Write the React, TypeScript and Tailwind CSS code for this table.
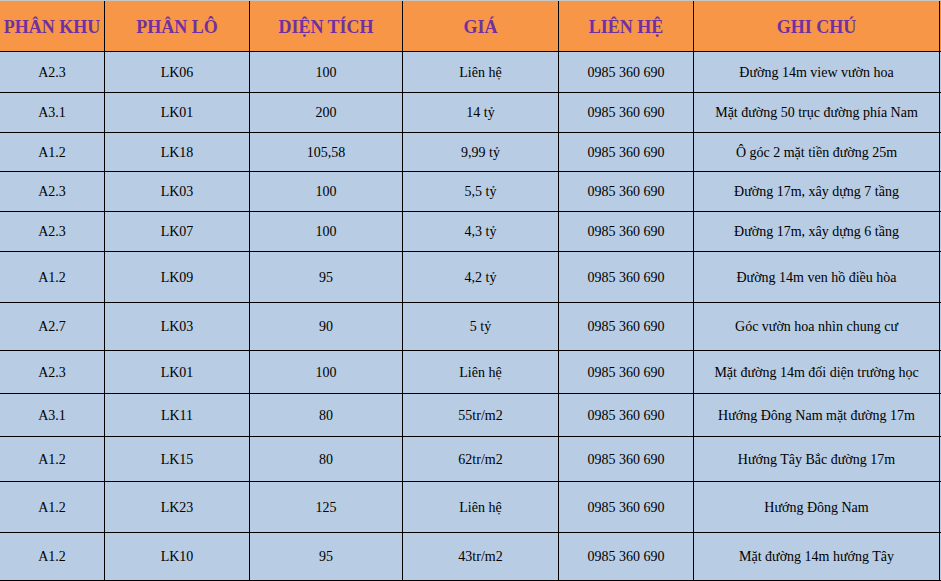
const cols = ['w-[105px]', 'w-[145px]', 'w-[153px]', 'w-[156px]', 'w-[135px]', 'w-[246px]'];

const headers = ['PHÂN KHU', 'PHÂN LÔ', 'DIỆN TÍCH', 'GIÁ', 'LIÊN HỆ', 'GHI CHÚ'];

const rows: { h: string; cells: string[] }[] = [
  { h: 'h-[41px]', cells: ['A2.3', 'LK06', '100', 'Liên hệ', '0985 360 690', 'Đường 14m view vườn hoa'] },
  { h: 'h-[40px]', cells: ['A3.1', 'LK01', '200', '14 tỷ', '0985 360 690', 'Mặt đường 50 trục đường phía Nam'] },
  { h: 'h-[39px]', cells: ['A1.2', 'LK18', '105,58', '9,99 tỷ', '0985 360 690', 'Ô góc 2 mặt tiền đường 25m'] },
  { h: 'h-[40px]', cells: ['A2.3', 'LK03', '100', '5,5 tỷ', '0985 360 690', 'Đường 17m, xây dựng 7 tầng'] },
  { h: 'h-[40px]', cells: ['A2.3', 'LK07', '100', '4,3 tỷ', '0985 360 690', 'Đường 17m, xây dựng 6 tầng'] },
  { h: 'h-[51px]', cells: ['A1.2', 'LK09', '95', '4,2 tỷ', '0985 360 690', 'Đường 14m ven hồ điều hòa'] },
  { h: 'h-[48px]', cells: ['A2.7', 'LK03', '90', '5 tỷ', '0985 360 690', 'Góc vườn hoa nhìn chung cư'] },
  { h: 'h-[43px]', cells: ['A2.3', 'LK01', '100', 'Liên hệ', '0985 360 690', 'Mặt đường 14m đối diện trường học'] },
  { h: 'h-[43px]', cells: ['A3.1', 'LK11', '80', '55tr/m2', '0985 360 690', 'Hướng Đông Nam mặt đường 17m'] },
  { h: 'h-[45px]', cells: ['A1.2', 'LK15', '80', '62tr/m2', '0985 360 690', 'Hướng Tây Bắc đường 17m'] },
  { h: 'h-[51px]', cells: ['A1.2', 'LK23', '125', 'Liên hệ', '0985 360 690', 'Hướng Đông Nam'] },
  { h: 'h-[48px]', cells: ['A1.2', 'LK10', '95', '43tr/m2', '0985 360 690', 'Mặt đường 14m hướng Tây'] },
];

export default function App() {
  return (
    <div className="w-[941px] h-[581px] overflow-hidden bg-[#b8cce4] font-['Liberation_Serif',serif]">
      <div className="h-px bg-[#c8c8c8]" />
      <div className="flex h-[51px] bg-[#f79646] border-b border-black">
        {headers.map((t, i) => (
          <div
            key={t}
            className={`${cols[i]} shrink-0 flex items-center justify-center pt-[3px] border-r border-black text-[18px] font-bold text-[#7030a0] whitespace-nowrap`}
          >
            {t}
          </div>
        ))}
      </div>
      {rows.map((r, ri) => (
        <div key={ri} className={`flex ${r.h} border-b border-black`}>
          {r.cells.map((c, i) => (
            <div
              key={i}
              className={`${cols[i]} shrink-0 flex items-center justify-center border-r border-black text-[14px] text-black whitespace-nowrap`}
            >
              {c}
            </div>
          ))}
        </div>
      ))}
    </div>
  );
}
